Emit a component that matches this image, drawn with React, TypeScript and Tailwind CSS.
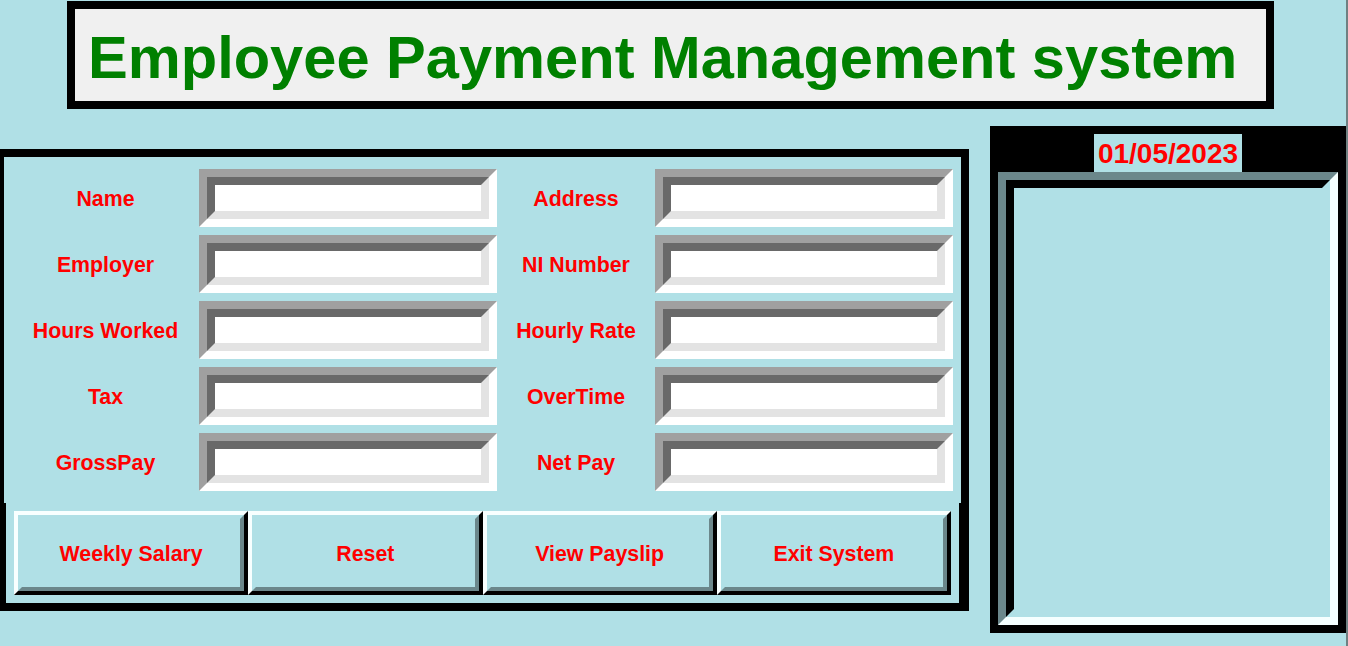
import React from 'react';

const rows: [string, string][] = [
  ['Name', 'Address'],
  ['Employer', 'NI Number'],
  ['Hours Worked', 'Hourly Rate'],
  ['Tax', 'OverTime'],
  ['GrossPay', 'Net Pay'],
];

const buttons = ['Weekly Salary', 'Reset', 'View Payslip', 'Exit System'];

// Tk-style sunken entry: two 8px bevel rings
const SunkenEntry: React.FC = () => (
  <div className="w-[298px] h-[58px] border-8 border-t-[#a0a0a0] border-l-[#a0a0a0] border-b-white border-r-white">
    <div className="h-full border-8 border-t-[#696969] border-l-[#696969] border-b-[#e3e3e3] border-r-[#e3e3e3] bg-white" />
  </div>
);

const FieldLabel: React.FC<{ text: string; width: string }> = ({ text, width }) => (
  <div className={`${width} flex justify-center pt-[3px] text-[21.33px] font-bold text-[#ff0000]`}>{text}</div>
);

export default function App() {
  return (
    <div className="w-[1348px] h-[646px] overflow-hidden bg-[#b0e0e6] border-r-2 border-r-[#6f8082] font-['Liberation_Sans',Arial,sans-serif]">
      {/* title */}
      <div className="ml-[67px] mt-px w-[1207px] h-[108px] border-8 border-black bg-[#f0f0f0] flex items-center pl-[13px] pt-[5px]">
        <h1 className="text-[59.6px] font-bold text-[#008000] leading-normal whitespace-nowrap">
          Employee Payment Management system
        </h1>
      </div>

      <div className="flex items-start gap-[21px]">
        {/* left: form + buttons */}
        <div className="mt-[40px] w-[969px] border-black border-l-4 border-t-8 border-r-8 border-b-8">
          <div className="h-[346px] px-2 py-3 flex flex-col gap-2">
            {rows.map(([a, b]) => (
              <div key={a} className="flex items-center h-[58px]">
                <FieldLabel text={a} width="w-[187px]" />
                <SunkenEntry />
                <FieldLabel text={b} width="w-[158px]" />
                <SunkenEntry />
              </div>
            ))}
          </div>
          <div className="h-[100px] border-x-2 border-black p-2 grid grid-cols-4">
            {buttons.map((label) => (
              <button
                key={label}
                className="h-[84px] border-4 border-t-[#f8ffff] border-l-[#f8ffff] border-b-black border-r-black bg-[#b0e0e6]"
              >
                <div className="h-full flex items-center justify-center pt-[3px] border-4 border-t-[#b0e0e6] border-l-[#b0e0e6] border-b-[#6b878b] border-r-[#6b878b] text-[21.33px] font-bold text-[#ff0000]">
                  {label}
                </div>
              </button>
            ))}
          </div>
        </div>

        {/* right: date + display */}
        <div className="mt-[17px] w-[356px] h-[507px] bg-black p-2 flex flex-col">
          <div className="self-center h-[38px] px-1 pt-[2px] bg-[#b0e0e6] flex items-center text-[28px] font-bold text-[#ff0000]">
            01/05/2023
          </div>
          <div className="flex-1 border-8 border-t-[#6b878b] border-l-[#6b878b] border-b-[#f5ffff] border-r-[#f5ffff]">
            <div className="h-full border-8 border-t-black border-l-black border-b-[#b0e0e6] border-r-[#b0e0e6] bg-[#b0e0e6]" />
          </div>
        </div>
      </div>
    </div>
  );
}
